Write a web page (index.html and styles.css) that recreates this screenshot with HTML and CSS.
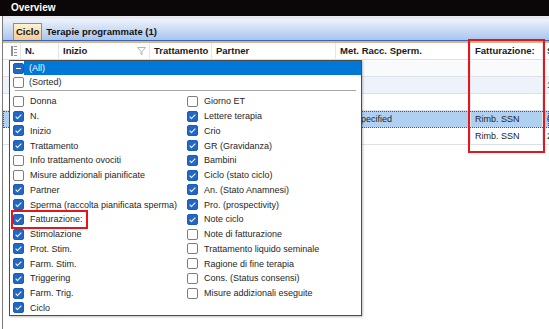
FILE: index.html
```html
<!DOCTYPE html>
<html lang="it">
<head>
    <meta charset="UTF-8">
    <title>Overview</title>
    <link rel="stylesheet" href="styles.css">
</head>
<body>
    <div class="titlebar">Overview</div>
    <div class="window">
        <div class="tabbar">
            <div class="tab active">Ciclo</div>
            <div class="tab">Terapie programmate (1)</div>
        </div>
        <div class="tabline"></div>

        <div class="grid-head">
            <div class="cell chooser">
                <svg width="6" height="10" viewBox="0 0 6 10">
                    <rect x="0" y="0" width="2" height="10" fill="#8a8f98"/>
                    <rect x="3" y="0" width="3" height="1" fill="#8a8f98"/>
                    <rect x="3" y="3" width="3" height="1" fill="#8a8f98"/>
                    <rect x="3" y="6" width="3" height="1" fill="#8a8f98"/>
                    <rect x="3" y="9" width="3" height="1" fill="#8a8f98"/>
                </svg>
            </div>
            <div class="cell">N.</div>
            <div class="cell filter">Inizio
                <svg width="9" height="8" viewBox="0 0 9 8"><path d="M0.5 0.5 H8.5 L5 4.5 V7.5 H4 V4.5 Z" fill="none" stroke="#b4b4b4"/></svg>
            </div>
            <div class="cell">Trattamento</div>
            <div class="cell">Partner</div>
            <div class="cell">Met. Racc. Sperm.</div>
            <div class="cell">Fatturazione:</div>
            <div class="cell">S</div>
        </div>

        <div class="grid-row r-light">
            <div class="cell"></div><div class="cell"></div><div class="cell"></div><div class="cell"></div>
            <div class="cell"></div><div class="cell"></div><div class="cell"></div><div class="cell"></div>
        </div>
        <div class="grid-row r-tint">
            <div class="cell"></div><div class="cell"></div><div class="cell"></div><div class="cell"></div>
            <div class="cell"></div><div class="cell"></div><div class="cell"></div><div class="cell num-purple">1</div>
        </div>
        <div class="grid-row">
            <div class="cell"></div><div class="cell"></div><div class="cell"></div><div class="cell"></div>
            <div class="cell"></div><div class="cell"></div><div class="cell"></div><div class="cell"></div>
        </div>
        <div class="grid-row r-selected">
            <div class="cell"></div><div class="cell"></div><div class="cell"></div><div class="cell"></div>
            <div class="cell"></div><div class="cell">Not specified</div><div class="cell">Rimb. SSN</div><div class="cell">0</div>
        </div>
        <div class="grid-row">
            <div class="cell"></div><div class="cell"></div><div class="cell"></div><div class="cell"></div>
            <div class="cell"></div><div class="cell"></div><div class="cell">Rimb. SSN</div><div class="cell">2</div>
        </div>
    </div>

    <!-- column chooser popup -->
    <div class="chooser-panel">
        <div class="opt opt-all"><span class="cb part"></span><span class="opt-label">(All)</span></div>
        <div class="opt"><span class="cb"></span><span class="opt-label">(Sorted)</span></div>
        <div class="sep"></div>
        <div class="cols">
            <div class="col">
                <div class="item"><span class="cb"></span>Donna</div>
                <div class="item"><span class="cb on"></span>N.</div>
                <div class="item"><span class="cb on"></span>Inizio</div>
                <div class="item"><span class="cb on"></span>Trattamento</div>
                <div class="item"><span class="cb"></span>Info trattamento ovociti</div>
                <div class="item"><span class="cb"></span>Misure addizionali pianificate</div>
                <div class="item"><span class="cb on"></span>Partner</div>
                <div class="item"><span class="cb on"></span>Sperma (raccolta pianificata sperma)</div>
                <div class="item"><span class="cb on"></span>Fatturazione:</div>
                <div class="item"><span class="cb on"></span>Stimolazione</div>
                <div class="item"><span class="cb on"></span>Prot. Stim.</div>
                <div class="item"><span class="cb on"></span>Farm. Stim.</div>
                <div class="item"><span class="cb on"></span>Triggering</div>
                <div class="item"><span class="cb on"></span>Farm. Trig.</div>
                <div class="item"><span class="cb on"></span>Ciclo</div>
            </div>
            <div class="col">
                <div class="item"><span class="cb"></span>Giorno ET</div>
                <div class="item"><span class="cb on"></span>Lettere terapia</div>
                <div class="item"><span class="cb on"></span>Crio</div>
                <div class="item"><span class="cb on"></span>GR (Gravidanza)</div>
                <div class="item"><span class="cb on"></span>Bambini</div>
                <div class="item"><span class="cb on"></span>Ciclo (stato ciclo)</div>
                <div class="item"><span class="cb on"></span>An. (Stato Anamnesi)</div>
                <div class="item"><span class="cb on"></span>Pro. (prospectivity)</div>
                <div class="item"><span class="cb on"></span>Note ciclo</div>
                <div class="item"><span class="cb"></span>Note di fatturazione</div>
                <div class="item"><span class="cb"></span>Trattamento liquido seminale</div>
                <div class="item"><span class="cb"></span>Ragione di fine terapia</div>
                <div class="item"><span class="cb"></span>Cons. (Status consensi)</div>
                <div class="item"><span class="cb"></span>Misure addizionali eseguite</div>
            </div>
        </div>
    </div>

    <!-- red highlight marks -->
    <div class="mark mark-column"></div>
    <div class="mark mark-item"></div>
</body>
</html>
```

FILE: styles.css
```css
body {
    margin: 0;
    width: 549px;
    height: 329px;
    overflow: hidden;
    position: relative;
    font-family: "Liberation Sans", Arial, sans-serif;
    font-size: 9px;
    color: #1e1e1e;
    background: #fff;
}
.titlebar {
    height: 16px;
    line-height: 16px;
    padding-left: 11px;
    background: #0b0709;
    color: #fff;
    font-weight: bold;
    font-size: 10px;
}
.window {
    margin-left: 2px;
    border-left: 1px solid #7b7b7b;
    height: 313px;
    background: #fff;
}
.tabbar {
    height: 21px;
    border-top: 3px solid #e6e9ef;
    border-bottom: 1px solid #3a62b5;
    background: linear-gradient(#eef3fb, #a8c5ef);
    display: flex;
    align-items: flex-end;
    padding-left: 10px;
}
.tab {
    height: 16px;
    line-height: 16px;
    padding: 0 4px;
    font-weight: bold;
    font-size: 9.5px;
    color: #111;
}
.tab.active {
    padding: 0 2px;
    border: 1px solid #6f8fd4;
    border-bottom: none;
    background: linear-gradient(#fff3d4, #f8c98c);
}
.tabline {
    height: 2px;
    background: #d6b68c;
}
.grid-head, .grid-row {
    display: grid;
    grid-template-columns: 17px 38px 91px 62px 124px 135px 72px 1fr;
    height: 17px;
    box-sizing: border-box;
    border-bottom: 1px solid #dde1e7;
}
.grid-head .cell {
    font-weight: bold;
    font-size: 9.5px;
    color: #1a1a1a;
}
.cell {
    line-height: 16px;
    padding-left: 4px;
    border-left: 1px solid #e4e6ea;
    white-space: nowrap;
    overflow: hidden;
}
.cell:first-child {
    border-left: none;
}
.chooser {
    display: flex;
    align-items: center;
    padding-left: 8px;
}
.filter {
    display: flex;
    align-items: center;
    justify-content: space-between;
    padding-right: 3px;
}
.r-light { background: #f9fafc; }
.r-tint { background: #eef3fb; }
.r-selected {
    background: #b0d0f2;
    outline: 1px dotted #555;
    outline-offset: -1px;
}
.num-purple { color: #3d0a55; }

.chooser-panel {
    position: absolute;
    left: 9px;
    top: 60px;
    width: 351px;
    height: 254px;
    border: 1px solid #4d4d4d;
    background: #fff;
    box-shadow: 1px 1px 2px rgba(0, 0, 0, 0.25);
    color: #262626;
}
.opt {
    display: flex;
    align-items: center;
    height: 14px;
    padding-left: 3px;
}
.opt-label {
    flex: 1;
    height: 14px;
    line-height: 14px;
    margin-left: 0;
    padding-left: 5px;
}
.opt-all .opt-label {
    background: #0078d7;
    color: #fff;
}
.sep {
    margin: 1px 5px 0;
    border-top: 1px solid #a7a7a7;
}
.cols {
    display: grid;
    grid-template-columns: 174px 1fr;
    padding-left: 3px;
    margin-top: 3px;
}
.item {
    display: flex;
    align-items: center;
    gap: 6px;
    height: 14.75px;
    white-space: nowrap;
}
.cb {
    position: relative;
    flex: none;
    width: 11px;
    height: 11px;
    box-sizing: border-box;
    border: 1px solid #7d7d7d;
    border-radius: 2px;
    background: #fff;
}
.cb.on, .cb.part {
    border-color: #1b5fb5;
    background: #2167c3;
}
.cb.on::after {
    content: "";
    position: absolute;
    left: 3px;
    top: 1px;
    width: 2px;
    height: 5px;
    border: solid #fff;
    border-width: 0 1px 1px 0;
    transform: rotate(45deg);
}
.cb.part::after {
    content: "";
    position: absolute;
    left: 2px;
    top: 4px;
    width: 5px;
    height: 1px;
    background: #fff;
}
.mark {
    position: absolute;
    border: 2px solid #e8141b;
    box-sizing: border-box;
}
.mark-column {
    left: 468px;
    top: 39px;
    width: 77px;
    height: 114px;
}
.mark-item {
    left: 11px;
    top: 210px;
    width: 77px;
    height: 19px;
}
```
